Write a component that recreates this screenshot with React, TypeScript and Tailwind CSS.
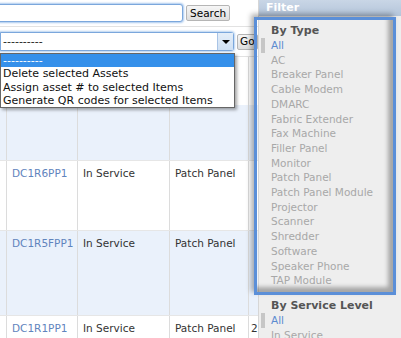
import React from "react";

const font = { fontFamily: '"DejaVu Sans", Verdana, sans-serif' };

const types = [
  "AC",
  "Breaker Panel",
  "Cable Modem",
  "DMARC",
  "Fabric Extender",
  "Fax Machine",
  "Filler Panel",
  "Monitor",
  "Patch Panel",
  "Patch Panel Module",
  "Projector",
  "Scanner",
  "Shredder",
  "Software",
  "Speaker Phone",
  "TAP Module",
];

const rows = [
  { tag: "DC1R6PP1", status: "In Service", type: "Patch Panel", h: "h-[70px]", bg: "bg-white" },
  { tag: "DC1R5FPP1", status: "In Service", type: "Patch Panel", h: "h-[85px]", bg: "bg-[#eaf1fb]" },
  { tag: "DC1R1PP1", status: "In Service", type: "Patch Panel", h: "h-[40px]", bg: "bg-white", extra: "2" },
];

function Row({ r }: { r: (typeof rows)[number] }) {
  return (
    <div className={`flex shrink-0 ${r.h} ${r.bg} border-t border-[#e6e6e6]`}>
      <div className="w-[7px] border-r border-[#dcdcdc]" />
      <div className="w-[71px] border-r border-[#dcdcdc] pl-[5px] pt-[5px] text-[#5f84bd]">{r.tag}</div>
      <div className="w-[92px] border-r border-[#dcdcdc] pl-[5px] pt-[5px] text-[#333]">{r.status}</div>
      <div className="w-[79px] border-r border-[#dcdcdc] pl-[5px] pt-[5px] text-[#333]">{r.type}</div>
      <div className="flex-1 pl-[2px] pt-[5px] text-[#333]">{r.extra}</div>
    </div>
  );
}

function EmptyRow({ h, bg }: { h: string; bg: string }) {
  return (
    <div className={`flex shrink-0 ${h} ${bg}`}>
      <div className="w-[7px] border-r border-[#dcdcdc]" />
      <div className="w-[71px] border-r border-[#dcdcdc]" />
      <div className="w-[92px] border-r border-[#dcdcdc]" />
      <div className="w-[79px] border-r border-[#dcdcdc]" />
      <div className="flex-1" />
    </div>
  );
}

export default function App() {
  return (
    <div className="relative flex w-[401px] h-[338px] overflow-hidden bg-white text-[10.5px]" style={font}>
      {/* Main list */}
      <div className="w-[258px] flex flex-col shrink-0">
        {/* search row */}
        <div className="h-[27px] shrink-0 flex items-center gap-[3px] border-b border-[#e2e2e2]">
          <div className="-ml-[10px] w-[193px] h-[18px] rounded-[3px] border border-[#7ba7dc] bg-white shadow-[0_0_2px_1px_#a9c8ee]" />
          <button className="h-[16px] px-[3px] border border-[#b5b5b5] rounded-[2px] bg-gradient-to-b from-[#f6f6f6] to-[#dedede] text-[10.5px] leading-none text-black">
            Search
          </button>
        </div>

        {/* actions row */}
        <div className="h-[30px] shrink-0 flex items-center gap-[3px] border-b border-[#e2e2e2]">
          <div className="w-[234px] h-[19px] flex border border-[#7ba7dc] rounded-r-[3px] bg-white shadow-[0_0_2px_1px_#b8d2f0]">
            <div className="flex-1 pl-[2px] text-[11px] leading-[17px] text-[#222]">----------</div>
            <div className="w-[16px] flex items-center justify-center bg-gradient-to-b from-[#e4eef9] to-[#cfe0f3] border-l border-[#a9c4e6]">
              <div className="w-0 h-0 border-l-[4px] border-r-[4px] border-t-[4px] border-l-transparent border-r-transparent border-t-black" />
            </div>
          </div>
          <button className="h-[16px] px-[2px] border border-[#b5b5b5] rounded-[2px] bg-gradient-to-b from-[#f6f6f6] to-[#dedede] text-[10.5px] leading-none text-black">
            Go
          </button>
        </div>

        {/* header row (hidden under the menu) and top of first row */}
        <EmptyRow h="h-[48px]" bg="bg-white" />
        <EmptyRow h="h-[55px]" bg="bg-[#eaf1fb]" />

        {rows.map((r) => (
          <Row key={r.tag} r={r} />
        ))}
      </div>

      {/* Filter sidebar */}
      <div className="flex-1 bg-[#eeeeee] border-l border-[#d6d6d6]">
        <div className="h-[16px] bg-gradient-to-b from-[#c9d6e6] to-[#b4c5da] pl-[7px] text-[11px] leading-[16px] font-bold text-white">
          Filter
        </div>
        <div className="pt-[8px] pl-[2px]">
          <div className="pl-[10px] font-bold text-[11px] leading-[14px] text-[#555]">By Type</div>
          <div className="border-l-[4px] border-[#c6c6c6] pl-[6px] leading-[14.7px] text-[#5b8bd0]">All</div>
          {types.map((t) => (
            <div key={t} className="pl-[10px] leading-[14.7px] text-[#a8a8a8]">
              {t}
            </div>
          ))}
          <div className="mt-[10px] pl-[10px] font-bold text-[11px] leading-[15px] text-[#555]">By Service Level</div>
          <div className="border-l-[4px] border-[#c6c6c6] pl-[6px] leading-[14.7px] text-[#5b8bd0]">All</div>
          <div className="pl-[10px] leading-[14.7px] text-[#a8a8a8]">In Service</div>
        </div>
      </div>

      {/* dropdown menu open */}
      <div className="absolute left-0 top-[53px] w-[235px] border border-[#666] bg-white text-[11px] leading-[13.3px] text-[#111] shadow-[2px_2px_3px_rgba(0,0,0,0.35)]">
        <div className="bg-[#3590ea] pl-[2px] text-white">----------</div>
        <div className="pl-[2px]">Delete selected Assets</div>
        <div className="pl-[2px]">Assign asset # to selected Items</div>
        <div className="pl-[2px]">Generate QR codes for selected Items</div>
      </div>

      {/* highlight box */}
      <div className="absolute left-[254px] top-[17px] w-[142px] h-[278px] border-[3px] border-[#5b8fd8] shadow-[-3px_-3px_5px_rgba(0,0,0,0.3),inset_-5px_-5px_4px_rgba(0,0,0,0.3)]" />
    </div>
  );
}
